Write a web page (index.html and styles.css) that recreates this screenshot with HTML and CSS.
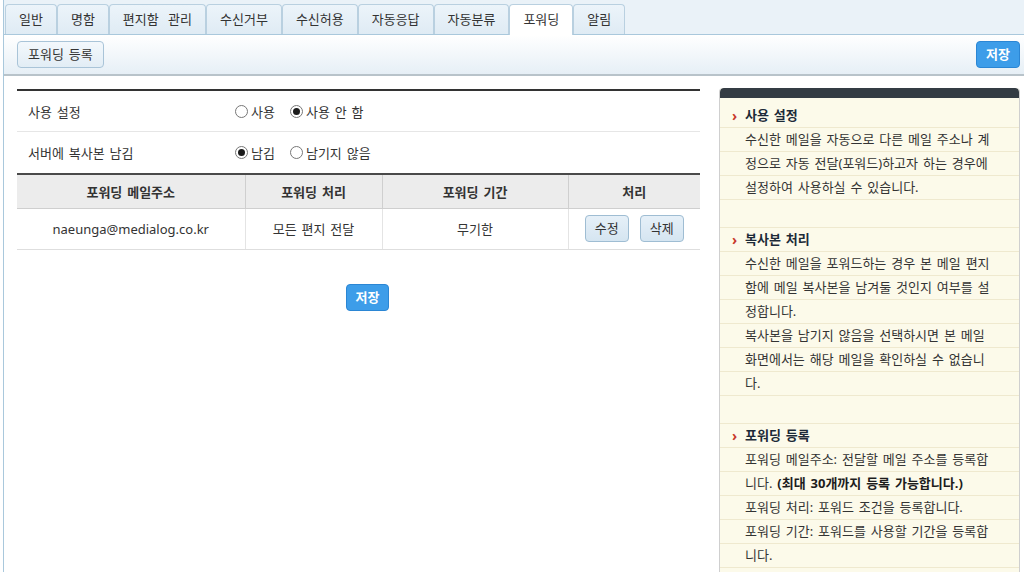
FILE: index.html
```html
<!DOCTYPE html>
<html lang="ko">
<head>
<meta charset="utf-8">
<title>포워딩</title>
<link rel="stylesheet" href="styles.css">
</head>
<body>
<div class="page">
  <nav class="tabbar">
    <span class="tab">일반</span>
    <span class="tab">명함</span>
    <span class="tab tab-wide">편지함 관리</span>
    <span class="tab">수신거부</span>
    <span class="tab">수신허용</span>
    <span class="tab">자동응답</span>
    <span class="tab">자동분류</span>
    <span class="tab active">포워딩</span>
    <span class="tab">알림</span>
  </nav>
  <div class="toolbar">
    <button class="btn btn-light">포워딩 등록</button>
    <button class="btn btn-blue">저장</button>
  </div>
  <main class="main">
    <section class="content">
      <div class="setting-row">
        <div class="setting-label">사용 설정</div>
        <div class="options">
          <label class="opt"><span class="radio"></span>사용</label>
          <label class="opt"><span class="radio on"></span>사용 안 함</label>
        </div>
      </div>
      <div class="setting-row last">
        <div class="setting-label">서버에 복사본 남김</div>
        <div class="options">
          <label class="opt"><span class="radio on"></span>남김</label>
          <label class="opt"><span class="radio"></span>남기지 않음</label>
        </div>
      </div>
      <table class="list">
        <colgroup>
          <col class="c1"><col class="c2"><col class="c3"><col class="c4">
        </colgroup>
        <thead>
          <tr><th>포워딩 메일주소</th><th>포워딩 처리</th><th>포워딩 기간</th><th>처리</th></tr>
        </thead>
        <tbody>
          <tr>
            <td>naeunga@medialog.co.kr</td>
            <td>모든 편지 전달</td>
            <td>무기한</td>
            <td><span class="row-btns"><button class="btn btn-small">수정</button><button class="btn btn-small">삭제</button></span></td>
          </tr>
        </tbody>
      </table>
      <div class="save-wrap"><button class="btn btn-blue">저장</button></div>
    </section>
    <aside class="help">
      <div class="help-top"></div>
      <div class="help-body">
        <div class="sec">
          <div class="ln head"><span class="chev">›</span>사용 설정</div>
          <div class="ln">수신한 메일을 자동으로 다른 메일 주소나 계</div>
          <div class="ln">정으로 자동 전달(포워드)하고자 하는 경우에</div>
          <div class="ln">설정하여 사용하실 수 있습니다.</div>
          <div class="gap"></div>
        </div>
        <div class="sec">
          <div class="ln head"><span class="chev">›</span>복사본 처리</div>
          <div class="ln">수신한 메일을 포워드하는 경우 본 메일 편지</div>
          <div class="ln">함에 메일 복사본을 남겨둘 것인지 여부를 설</div>
          <div class="ln">정합니다.</div>
          <div class="ln">복사본을 남기지 않음을 선택하시면 본 메일</div>
          <div class="ln">화면에서는 해당 메일을 확인하실 수 없습니</div>
          <div class="ln">다.</div>
          <div class="gap"></div>
        </div>
        <div class="sec">
          <div class="ln head"><span class="chev">›</span>포워딩 등록</div>
          <div class="ln">포워딩 메일주소: 전달할 메일 주소를 등록합</div>
          <div class="ln">니다. <b>(최대 30개까지 등록 가능합니다.)</b></div>
          <div class="ln">포워딩 처리: 포워드 조건을 등록합니다.</div>
          <div class="ln">포워딩 기간: 포워드를 사용할 기간을 등록합</div>
          <div class="ln">니다.</div>
          <div class="gap"></div>
        </div>
      </div>
    </aside>
  </main>
</div>
</body>
</html>
```
FILE: styles.css
```css
* { box-sizing: border-box; }
html, body { margin: 0; padding: 0; background: #fff; }
body {
  font-family: "Noto Sans", "Noto Sans CJK KR", sans-serif;
  font-size: 13px;
  color: #333;
  word-spacing: 1.5px;
}
.page {
  margin-left: 3px;
  border-left: 1px solid #a9c8dc;
  min-height: 572px;
  overflow: hidden;
}
.tabbar {
  display: flex;
  align-items: flex-end;
  height: 35px;
  padding-left: 1px;
  background: #eaf2f8;
  border-bottom: 1px solid #a9c8dc;
}
.tab {
  height: 30px;
  line-height: 29px;
  padding: 0 13px;
  border: 1px solid #b9d0e0;
  border-bottom: none;
  border-radius: 4px 4px 0 0;
  background: linear-gradient(#ecf4fa, #dfebf4);
  color: #333;
  white-space: nowrap;
}
.tab-wide { word-spacing: 6px; }
.tab.active {
  height: 31px;
  margin-bottom: -1px;
  background: #fff;
}
.toolbar {
  display: flex;
  justify-content: space-between;
  align-items: flex-start;
  height: 41px;
  padding: 6px 4px 0 13px;
  background: linear-gradient(#ffffff, #e6eff6);
  border-bottom: 2px solid #b8c3ca;
}
.btn {
  font: inherit;
  word-spacing: inherit;
  height: 27px;
  padding: 0 9px;
  border-radius: 4px;
  cursor: pointer;
  line-height: 25px;
}
.btn-light {
  border: 1px solid #a9c4d8;
  background: linear-gradient(#f3f8fc, #e2edf5);
  color: #333;
  padding: 0 10px;
}
.btn-blue {
  border: 1px solid #2b86d4;
  background: #3d9de9;
  color: #fff;
  font-weight: bold;
  padding: 0 9px;
}
.main {
  display: flex;
  gap: 19px;
  padding: 12px 4px 0 13px;
}
.content {
  width: 683px;
  flex: none;
  margin-top: 1px;
  border-top: 2px solid #333;
}
.setting-row {
  display: grid;
  grid-template-columns: 207px 1fr;
  align-items: center;
  height: 41px;
  border-bottom: 1px solid #e6e6e6;
  padding-left: 11px;
}
.setting-row.last { border-bottom: none; }
.options { display: flex; gap: 15px; }
.opt { display: flex; align-items: center; gap: 3px; white-space: nowrap; }
.radio {
  width: 13px;
  height: 13px;
  border-radius: 50%;
  border: 1px solid #777;
  background: #fff;
  display: inline-flex;
  align-items: center;
  justify-content: center;
}
.radio.on::after {
  content: "";
  width: 7px;
  height: 7px;
  border-radius: 50%;
  background: #1b1b1b;
}
.list {
  width: 100%;
  border-collapse: collapse;
  table-layout: fixed;
  border-top: 2px solid #4a4a4a;
}
.list col.c1 { width: 228px; }
.list col.c2 { width: 137px; }
.list col.c3 { width: 186px; }
.list col.c4 { width: 132px; }
.list th {
  height: 34px;
  background: #ececec;
  font-weight: bold;
  color: #333;
  border-bottom: 1px solid #cfcfcf;
  border-left: 1px solid #cfcfcf;
  text-align: center;
  padding: 0;
}
.list td {
  height: 41px;
  text-align: center;
  border-bottom: 1px solid #dedede;
  border-left: 1px solid #e4e4e4;
  padding: 0;
}
.list th:first-child, .list td:first-child { border-left: none; }
.row-btns { display: inline-flex; gap: 11px; vertical-align: middle; }
.btn-small {
  height: 27px;
  padding: 0 9px;
  border: 1px solid #9fbdd3;
  background: linear-gradient(#e6f0f8, #d5e5f1);
  color: #333;
}
.save-wrap {
  display: flex;
  justify-content: center;
  padding-left: 18px;
  margin-top: 34px;
}
.save-wrap .btn-blue { height: 27px; }
.help {
  flex: 1;
  min-width: 0;
  border-left: 1px solid #cfcfcf;
  border-right: 1px solid #cfcfcf;
  border-radius: 4px 4px 0 0;
  background: #fcfaea;
  min-height: 500px;
  overflow: hidden;
}
.help-top {
  height: 10px;
  background: #343c44;
  border-radius: 4px 4px 0 0;
}
.help-body { padding: 6px 0 0 0; }
.ln {
  height: 24px;
  line-height: 23px;
  padding-left: 25px;
  border-bottom: 1px solid #efe9cf;
  white-space: nowrap;
  color: #333;
}
.ln b { color: #1d1d1d; }
.head {
  font-weight: bold;
  color: #1c2a38;
  padding-left: 12px;
  display: flex;
  align-items: center;
}
.chev {
  color: #c8372d;
  font-weight: bold;
  width: 13px;
  font-size: 14px;
  line-height: 20px;
}
.gap {
  height: 28px;
  border-bottom: 1px solid #efe9cf;
}
```
